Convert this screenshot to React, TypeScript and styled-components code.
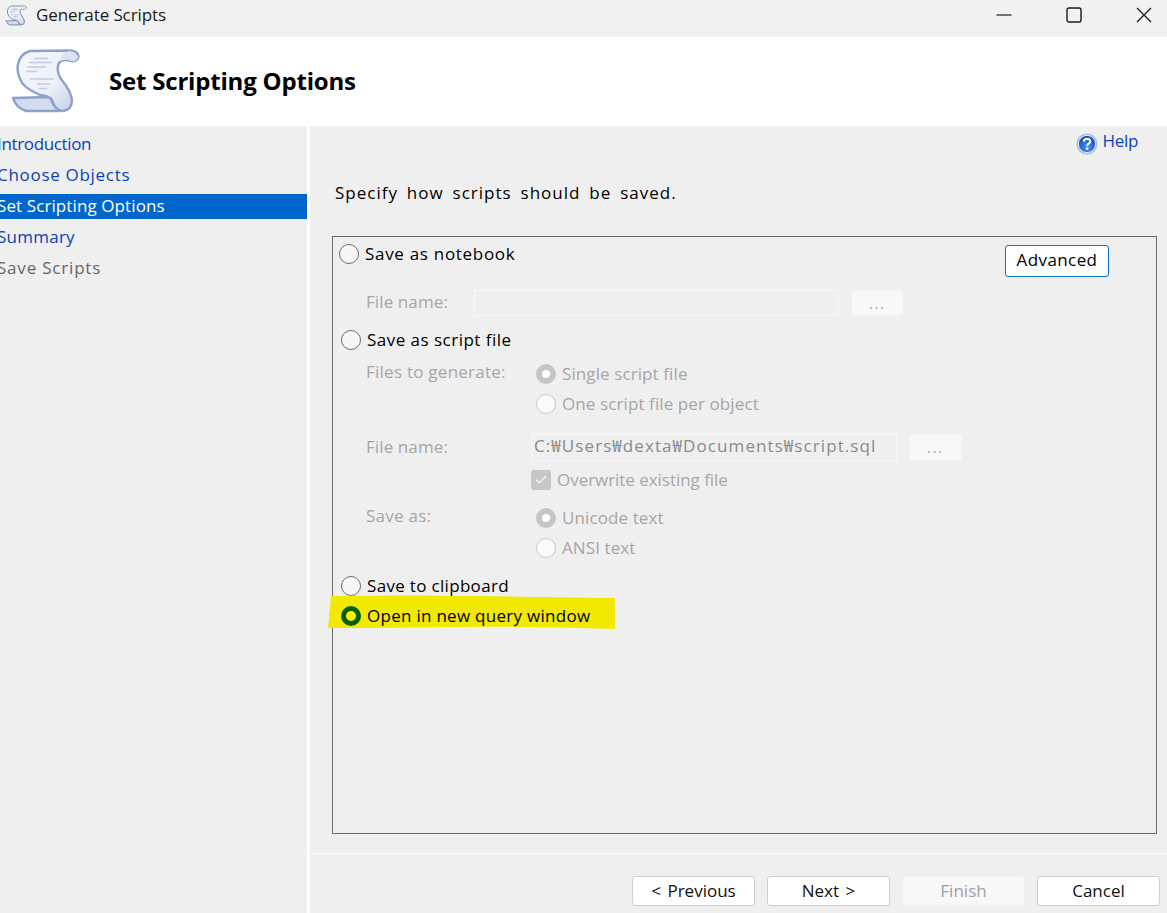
import React from "react";
import styled, { createGlobalStyle } from "styled-components";
import { Check } from "lucide-react";

const Global = createGlobalStyle`
  html, body { margin: 0; padding: 0; background: #fff; }
  body { font-family: "Open Sans", "Noto Sans CJK KR", sans-serif; }
  * { box-sizing: border-box; }
`;
const Page = styled.div`
  width: 1167px; height: 913px; display: flex; flex-direction: column; overflow: hidden; background: #fff; color: #111;
`;
const TitleBar = styled.div`
  height: 37px; background: #f1f1f1; display: flex; align-items: center; padding: 0 0 7px 5px; flex: none;
`;
const TitleText = styled.span`
  margin-left: 9px; font-size: 17px; color: #1a1a1a; letter-spacing: -0.1px; flex: 1; line-height: 24px;
`;
const WinControls = styled.div`
  display: flex; align-items: center; padding-right: 15px; gap: 54px; color: #1a1a1a;
`;
const Banner = styled.div`
  height: 89px; display: flex; align-items: center; padding: 0 0 2px 10px; flex: none;
`;
const BannerTitle = styled.h1`
  margin: 0 0 0 29px; font-size: 24px; font-weight: 700; color: #000; letter-spacing: -0.2px; line-height: 30px;
`;
const Body = styled.div`
  flex: 1; display: flex; gap: 3px; min-height: 0;
`;
const Sidebar = styled.nav`
  width: 307px; background: #efefef; padding-top: 6px; display: flex; flex-direction: column; overflow: hidden; flex: none;
`;
const NavItem = styled.div<{ $state: "link" | "active" | "muted"; $track: number }>`
  height: 25px; margin-bottom: 6px; font-size: 17px; line-height: 24px; text-indent: -3px; white-space: nowrap;
  letter-spacing: ${(p) => p.$track}px;
  background: ${(p) => (p.$state === "active" ? "#0066cc" : "transparent")};
  color: ${(p) => (p.$state === "active" ? "#fff" : p.$state === "muted" ? "#666" : "#0a3fc0")};
`;
const Main = styled.main`
  flex: 1; background: #efefef; display: flex; flex-direction: column; min-width: 0;
`;
const HelpRow = styled.div`
  height: 31px; padding: 5px 29px 0 0; display: flex; justify-content: flex-end; align-items: flex-start; gap: 4px; flex: none;
`;
const HelpText = styled.span`
  font-size: 17px; line-height: 20px; color: #0a3fc0; letter-spacing: -0.3px;
`;
const Intro = styled.p`
  margin: 24px 0 0 25px; font-size: 17px; line-height: 24px; color: #000; letter-spacing: 1px; word-spacing: 3.5px; white-space: nowrap; flex: none;
`;
const Group = styled.section`
  position: relative; margin: 31px 0 0 22px; width: 825px; height: 598px; border: 1px solid #6a6a6a; flex: none;
  display: flex; flex-direction: column;
`;
const TopRow = styled.div`
  height: 0; display: flex; justify-content: flex-end; padding-right: 47px;
`;
const Radio = styled.span<{ $on?: boolean; $off?: boolean; $green?: boolean }>`
  width: 20px; height: 20px; border-radius: 50%; flex: none; display: inline-block;
  background: ${(p) => (p.$green ? "#fff200" : p.$on ? "#fff" : p.$off ? "#fafafa" : "#f7f7f7")};
  border: ${(p) => (p.$green ? "5px solid #056005" : p.$on ? "6px solid #c6c6c6" : p.$off ? "1px solid #c9c9c9" : "1px solid #6b6b6b")};
`;
const OptionRow = styled.div<{ $top: number; $left: number }>`
  position: relative; display: flex; align-items: center; gap: 6px; height: 20px;
  margin-top: ${(p) => p.$top}px; margin-left: ${(p) => p.$left}px;
`;
const OptionLabel = styled.span<{ $dim?: boolean; $track?: number }>`
  font-size: 17px; line-height: 20px; white-space: nowrap; position: relative;
  letter-spacing: ${(p) => p.$track ?? (p.$dim ? 0.1 : 0.32)}px;
  color: ${(p) => (p.$dim ? "#a6a6a6" : "#000")};
`;
const FieldRow = styled.div<{ $top: number; $tall?: boolean }>`
  display: flex; align-items: center; height: ${(p) => (p.$tall ? 27 : 26)}px; margin-top: ${(p) => p.$top}px; margin-left: 33px;
`;
const FieldLabel = styled.span<{ $w: number }>`
  width: ${(p) => p.$w}px; flex: none; font-size: 17px; line-height: 20px; color: #a6a6a6; letter-spacing: 0.1px; white-space: nowrap; margin-top: -2px;
`;
const FieldInput = styled.div`
  width: 365px; height: 100%; border: 1px solid #f8f8f8; background: #efefef; font-size: 17px; line-height: 22px;
  color: #8a8a8a; padding-left: 1px; white-space: nowrap; overflow: hidden; letter-spacing: 1.08px; flex: none;
`;
const Ellipsis = styled.div`
  width: 53px; height: 100%; margin-left: 12px; background: #f8f8f8; border: 1px solid #f1f1f1; border-radius: 3px;
  color: #9a9a9a; font-size: 14px; display: flex; align-items: center; justify-content: center; letter-spacing: 2px; flex: none;
`;
const SubStack = styled.div<{ $top: number }>`
  display: flex; align-items: flex-start; margin-left: 33px; margin-top: ${(p) => p.$top}px;
`;
const SubLabel = styled.span<{ $w?: number }>`
  width: ${(p) => p.$w ?? 170}px; height: 20px; flex: none; font-size: 17px; line-height: 20px; color: #a6a6a6; letter-spacing: 0.25px; white-space: nowrap; margin-top: -2px;
`;
const SubOptions = styled.div`
  display: flex; flex-direction: column; gap: 10px;
`;
const SubOption = styled.div`
  display: flex; align-items: center; gap: 6px; height: 20px;
`;
const CheckBox = styled.span`
  width: 20px; height: 20px; background: #c6c6c6; border-radius: 3px; display: flex; align-items: center; justify-content: center; color: #fff; flex: none;
`;
const Highlight = styled.svg`
  position: absolute; left: -13px; top: -11px; width: 288px; height: 35px;
`;
const GreenRadio = styled(Radio)`
  position: relative;
`;
const AdvancedButton = styled.button`
  width: 104px; height: 32px; margin-top: 8px; background: #fff; border: 1px solid #0a74d0; border-radius: 3px;
  font: inherit; font-size: 17px; line-height: 24px; color: #000; padding: 0 0 2px; letter-spacing: 0.4px; flex: none;
`;
const Rule = styled.div`
  height: 1px; background: #fbfbfb; margin-top: 19px; flex: none;
`;
const Footer = styled.div`
  display: flex; justify-content: flex-end; gap: 12px; padding: 22px 7px 0 0; flex: none;
`;
const FootButton = styled.button<{ $disabled?: boolean }>`
  width: 123px; height: 30px; border-radius: 3px; padding: 0; font: inherit; font-size: 17px; line-height: 28px; word-spacing: 2px;
  background: ${(p) => (p.$disabled ? "#f8f8f8" : "#fff")};
  border: 1px solid ${(p) => (p.$disabled ? "#f2f2f2" : "#cfcfcf")};
  color: ${(p) => (p.$disabled ? "#a0a0a0" : "#111")};
`;

const Scroll = ({ w, h, id, line, ink }: { w: number; h: number; id: string; line: string; ink: string }) => (
  <svg width={w} height={h} viewBox="10 48 70 66" style={{ flex: "none" }}>
    <defs>
      <linearGradient id={id} x1="0" y1="0" x2="1" y2="1">
        <stop offset="0" stopColor="#f4f6fb" />
        <stop offset="0.55" stopColor="#eef1f9" />
        <stop offset="1" stopColor="#bfcbe6" />
      </linearGradient>
    </defs>
    <path d="M13 98 L50 97 Q53 107 60 111 L26 111 Q16 108 13 98 Z" fill="#d3dbee" stroke={line} strokeWidth="2.4" strokeLinejoin="round" />
    <path
      d="M30 51 L70 50.5 Q78 51 78.5 57 Q77 62 71 61 Q62 58 58.5 64 Q56 71 61 79 Q71 91 72 100 Q72 110 63 111 Q55 110 52 100 Q50 96 40 95 Q28 90 22 83 Q16 72 18 64 Q20 54 30 51 Z"
      fill={`url(#${id})`}
      stroke={line}
      strokeWidth="2.4"
      strokeLinejoin="round"
    />
    <path d="M69 51 Q61 53 60 62 Q64 58 71 61 Q77 62 78 57 Q77 52 69 51 Z" fill="#dbe2f2" />
    <g stroke={ink} strokeWidth="1.6">
      <line x1="34" y1="58.5" x2="48" y2="58.5" />
      <line x1="29" y1="62.5" x2="52" y2="62.5" />
      <line x1="27" y1="67" x2="46" y2="67" />
      <line x1="26" y1="71.5" x2="37" y2="71.5" />
      <line x1="30" y1="79" x2="54" y2="79" />
      <line x1="37" y1="84" x2="50" y2="84" />
      <line x1="39" y1="88.5" x2="47" y2="88.5" />
    </g>
  </svg>
);

const HelpIcon = () => (
  <svg width="22" height="22" viewBox="0 0 22 22" style={{ flex: "none", marginTop: 2 }}>
    <defs>
      <radialGradient id="hg" cx="0.5" cy="0.7" r="0.65">
        <stop offset="0" stopColor="#4f94f2" />
        <stop offset="1" stopColor="#0f46b8" />
      </radialGradient>
    </defs>
    <circle cx="11" cy="11" r="10.5" fill="#a9bcd8" />
    <circle cx="11" cy="11" r="8.6" fill="url(#hg)" stroke="#e3ebf7" strokeWidth="1" />
    <path d="M7.8 8.6 Q8 5.8 11.2 5.8 Q14.4 6 14.2 8.6 Q14 10 12.4 10.9 Q11.3 11.6 11.3 13" fill="none" stroke="#fff" strokeWidth="2" />
    <circle cx="11.2" cy="15.6" r="1.3" fill="#fff" />
  </svg>
);

export default function App() {
  return (
    <Page>
      <Global />
      <TitleBar>
        <Scroll w={22} h={21} id="sc1" line="#5f6f8f" ink="#9aa9c6" />
        <TitleText>Generate Scripts</TitleText>
        <WinControls>
          <svg width="16" height="16" viewBox="0 0 16 16"><path d="M0.5 8 H15.5" stroke="currentColor" strokeWidth="1.2" /></svg>
          <svg width="16" height="16" viewBox="0 0 16 16"><rect x="1" y="1" width="14" height="14" rx="2" fill="none" stroke="currentColor" strokeWidth="1.4" /></svg>
          <svg width="16" height="16" viewBox="0 0 16 16"><path d="M1 1 L15 15 M15 1 L1 15" stroke="currentColor" strokeWidth="1.3" /></svg>
        </WinControls>
      </TitleBar>
      <Banner>
        <Scroll w={70} h={66} id="sc2" line="#8fa1c8" ink="#c3cde1" />
        <BannerTitle>Set Scripting Options</BannerTitle>
      </Banner>
      <Body>
        <Sidebar>
          <NavItem $state="link" $track={-0.35}>Introduction</NavItem>
          <NavItem $state="link" $track={0.7}>Choose Objects</NavItem>
          <NavItem $state="active" $track={0.1}>Set Scripting Options</NavItem>
          <NavItem $state="link" $track={0.25}>Summary</NavItem>
          <NavItem $state="muted" $track={0.8}>Save Scripts</NavItem>
        </Sidebar>
        <Main>
          <HelpRow>
            <HelpIcon />
            <HelpText>Help</HelpText>
          </HelpRow>
          <Intro>Specify how scripts should be saved.</Intro>
          <Group>
            <TopRow>
              <AdvancedButton>Advanced</AdvancedButton>
            </TopRow>
            <OptionRow $top={7} $left={6}>
              <Radio />
              <OptionLabel $track={0.7}>Save as notebook</OptionLabel>
            </OptionRow>
            <FieldRow $top={26}>
              <FieldLabel $w={108}>File name:</FieldLabel>
              <FieldInput />
              <Ellipsis>...</Ellipsis>
            </FieldRow>
            <OptionRow $top={14} $left={8}>
              <Radio />
              <OptionLabel $track={0.48}>Save as script file</OptionLabel>
            </OptionRow>
            <SubStack $top={14}>
              <SubLabel>Files to generate:</SubLabel>
              <SubOptions>
                <SubOption><Radio $on /><OptionLabel $dim>Single script file</OptionLabel></SubOption>
                <SubOption><Radio $off /><OptionLabel $dim>One script file per object</OptionLabel></SubOption>
              </SubOptions>
            </SubStack>
            <FieldRow $top={20} $tall>
              <FieldLabel $w={166}>File name:</FieldLabel>
              <FieldInput>C:₩Users₩dexta₩Documents₩script.sql</FieldInput>
              <Ellipsis>...</Ellipsis>
            </FieldRow>
            <SubStack $top={9}>
              <SubLabel $w={165} />
              <SubOption><CheckBox><Check size={14} strokeWidth={2} /></CheckBox><OptionLabel $dim $track={-0.04}>Overwrite existing file</OptionLabel></SubOption>
            </SubStack>
            <SubStack $top={18}>
              <SubLabel>Save as:</SubLabel>
              <SubOptions>
                <SubOption><Radio $on /><OptionLabel $dim>Unicode text</OptionLabel></SubOption>
                <SubOption><Radio $off /><OptionLabel $dim>ANSI text</OptionLabel></SubOption>
              </SubOptions>
            </SubStack>
            <OptionRow $top={18} $left={8}>
              <Radio />
              <OptionLabel>Save to clipboard</OptionLabel>
            </OptionRow>
            <OptionRow $top={10} $left={8}>
              <Highlight viewBox="0 0 288 34" preserveAspectRatio="none">
                <path d="M3 1 Q90 0 150 1 T287 3 L287 33 Q200 30 120 31 T0 32 Z" fill="#f2e900" />
              </Highlight>
              <GreenRadio $green />
              <OptionLabel $track={0.28}>Open in new query window</OptionLabel>
            </OptionRow>
          </Group>
          <Rule />
          <Footer>
            <FootButton>&lt; Previous</FootButton>
            <FootButton>Next &gt;</FootButton>
            <FootButton $disabled>Finish</FootButton>
            <FootButton>Cancel</FootButton>
          </Footer>
        </Main>
      </Body>
    </Page>
  );
}
